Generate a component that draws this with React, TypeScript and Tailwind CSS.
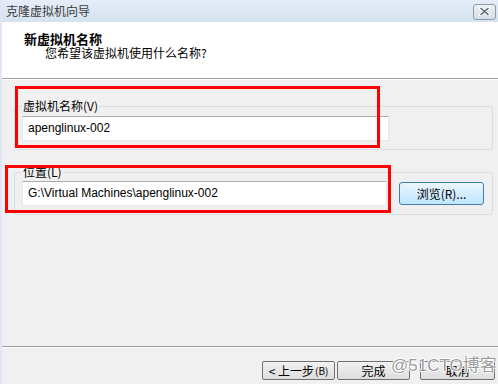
import React from "react";

const cjk = { fontFamily: '"Noto Sans CJK SC", "Liberation Sans", sans-serif' };
const latin = { fontFamily: '"Liberation Sans", "Noto Sans CJK SC", sans-serif' };

function GroupBox({ label, top, height, children }: { label: string; top: string; height: string; children: React.ReactNode }) {
  return (
    <div className={`relative ml-[12px] mr-[5px] ${top} ${height} rounded-[3px] border border-[#d5dfe5]`}>
      <span className="absolute left-[7px] top-[-9px] bg-[#f0f0f0] px-[1px] text-[12px] leading-[16px] text-black" style={cjk}>
        {label}
      </span>
      {children}
    </div>
  );
}

function TextBox({ value, width }: { value: string; width: string }) {
  return (
    <div
      className={`${width} h-[25px] border border-[#e3e9ef] border-t-[#abadb3] bg-white pl-[5px] text-[12px] leading-[23px] text-black`}
      style={latin}
    >
      {value}
    </div>
  );
}

function WinButton({ children, width, className = "" }: { children: React.ReactNode; width: string; className?: string }) {
  return (
    <div
      className={`${width} h-[19px] flex items-center justify-center border border-[#707070] rounded-[2px] bg-gradient-to-b from-[#f2f2f2] to-[#dddddd] text-[12px] text-black ${className}`}
      style={cjk}
    >
      {children}
    </div>
  );
}

export default function App() {
  return (
    <div className="relative w-[498px] h-[384px] overflow-hidden bg-[#f0f0f0] flex flex-col border-l-2 border-[#dde8f4]">
      {/* title bar */}
      <div className="h-[22px] flex items-center justify-between bg-gradient-to-b from-[#e4edf8] to-[#d5e2f0] pl-[4px] pr-[2px]">
        <span className="text-[12px] text-[#3a3a3a]" style={cjk}>克隆虚拟机向导</span>
        <div className="w-[23px] h-[16px] mt-[1px] flex items-center justify-center rounded-[3px] border border-[#8e9bab] bg-gradient-to-b from-[#eef2f7] to-[#d7dee8]">
          <svg width="11" height="9" viewBox="0 0 11 9">
            <path d="M1.5 1 L9.5 8 M9.5 1 L1.5 8" stroke="#ffffff" strokeWidth="3.2" strokeLinecap="square" />
            <path d="M1.5 1 L9.5 8 M9.5 1 L1.5 8" stroke="#5d6673" strokeWidth="1.6" />
          </svg>
        </div>
      </div>

      {/* header */}
      <div className="h-[56px] bg-white pl-[22px] pt-[9px]" style={cjk}>
        <div className="text-[13px] font-bold leading-[15px] text-black">新虚拟机名称</div>
        <div className="pl-[21px] text-[12px] leading-[14px] text-black">您希望该虚拟机使用什么名称?</div>
      </div>
      <div className="h-px bg-[#a0a0a0]" />
      <div className="h-px bg-white" />

      {/* body */}
      <div className="h-[266px] flex flex-col">
        <GroupBox label="虚拟机名称(V)" top="mt-[26px]" height="h-[44px]">
          <div className="pl-[7px] pt-[9px]">
            <TextBox value="apenglinux-002" width="w-[367px]" />
          </div>
        </GroupBox>
        <GroupBox label="位置(L)" top="mt-[22px]" height="h-[43px]">
          <div className="flex items-start pl-[7px] pt-[8px]">
            <TextBox value="G:\Virtual Machines\apenglinux-002" width="w-[365px]" />
            <div className="ml-[12px] mt-[1px] w-[85px] h-[23px] flex items-center justify-center rounded-[3px] border border-[#3c7fb1] bg-gradient-to-b from-[#eaf6fd] to-[#bee6fd] text-[12px] text-black" style={cjk}>
              浏览(R)...
            </div>
          </div>
        </GroupBox>
      </div>

      <div className="h-px bg-[#a0a0a0]" />
      <div className="h-px bg-white" />

      {/* footer buttons */}
      <div className="flex pl-[260px] pt-[13px] gap-[2px]">
        <WinButton width="w-[73px]">
          <span className="text-[12px]">&lt; 上一步</span>
          <span className="text-[10px] ml-[1px]">(B)</span>
        </WinButton>
        <WinButton width="w-[73px]">完成</WinButton>
        <WinButton width="w-[75px]" className="ml-[8px]">取消</WinButton>
      </div>

      {/* annotations */}
      <div className="absolute left-[13px] top-[86px] w-[365px] h-[62px] border-[3px] border-[#ff0000]" />
      <div className="absolute left-[3px] top-[165px] w-[386px] h-[48px] border-[3px] border-[#ff0000]" />
      <div
        className="absolute left-[389px] top-[355px] whitespace-nowrap text-[17px] leading-[22px] text-[#9c9c9c]"
        style={{
          fontFamily: '"Liberation Sans", "Noto Sans CJK SC", sans-serif',
          textShadow: "1px 0 0 #fff, -1px 0 0 #fff, 0 1px 0 #fff, 0 -1px 0 #fff",
        }}
      >
        @51CTO博客
      </div>
    </div>
  );
}
